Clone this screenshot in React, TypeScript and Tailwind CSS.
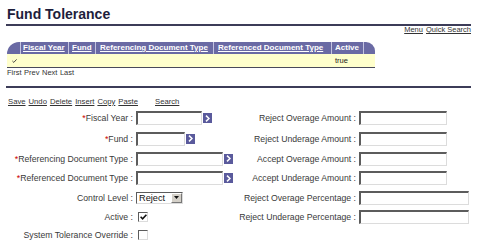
export default function App() {
    const inputCls = "h-[14px] bg-white border-t-2 border-l-2 border-b border-r border-t-[#5c5c5c] border-l-[#5c5c5c] border-b-[#dcdcdc] border-r-[#dcdcdc]"

    const Lookup = () => (
        <div className="w-[9px] h-[10px] ml-[1px] bg-[#5a5a9c] flex items-center justify-center">
            <svg width="5" height="7" viewBox="0 0 5 7">
                <path d="M1 0.6 L4 3.5 L1 6.4" stroke="white" strokeWidth="1.5" fill="none" />
            </svg>
        </div>
    )

    const Label = ({ text, req }: { text: string; req?: boolean }) => (
        <div className="text-right pr-[3px] whitespace-nowrap text-[#3a3a3a]">
            {req && <span className="text-[#cc0000]">*</span>}
            {text} :
        </div>
    )

    const Check = ({ checked }: { checked?: boolean }) => (
        <div className="ml-[2px] w-[10px] h-[10px] bg-white border-t border-l border-b border-r border-t-[#5c5c5c] border-l-[#5c5c5c] border-b-[#dcdcdc] border-r-[#dcdcdc] flex items-center justify-center">
            {checked && (
                <svg width="7" height="6" viewBox="0 0 7 6">
                    <path d="M0.6 2.8 L2.6 4.8 L6.4 0.8" stroke="#111" strokeWidth="1.6" fill="none" />
                </svg>
            )}
        </div>
    )

    const rows = [
        {
            h: "h-[20px]",
            left: <Label text="Fiscal Year" req />,
            field: <div className="flex items-center"><div className={`${inputCls} w-[66px]`} /><Lookup /></div>,
            right: <Label text="Reject Overage Amount" />,
            field2: <div className={`${inputCls} w-[88px]`} />,
        },
        {
            h: "h-[21px]",
            left: <Label text="Fund" req />,
            field: <div className="flex items-center"><div className={`${inputCls} w-[49px]`} /><Lookup /></div>,
            right: <Label text="Reject Underage Amount" />,
            field2: <div className={`${inputCls} w-[88px]`} />,
        },
        {
            h: "h-[19px]",
            left: <Label text="Referencing Document Type" req />,
            field: <div className="flex items-center"><div className={`${inputCls} w-[87px]`} /><Lookup /></div>,
            right: <Label text="Accept Overage Amount" />,
            field2: <div className={`${inputCls} w-[88px]`} />,
        },
        {
            h: "h-[20px]",
            left: <Label text="Referenced Document Type" req />,
            field: <div className="flex items-center"><div className={`${inputCls} w-[87px]`} /><Lookup /></div>,
            right: <Label text="Accept Underage Amount" />,
            field2: <div className={`${inputCls} w-[88px]`} />,
        },
        {
            h: "h-[19px]",
            left: <Label text="Control Level" />,
            field: (
                <div className="w-[47px] h-[12px] bg-white border-t border-l border-b border-r border-t-[#5c5c5c] border-l-[#5c5c5c] border-b-[#dcdcdc] border-r-[#dcdcdc] flex items-center">
                    <span className="flex-1 pl-[2px] text-[9.2px] leading-[10px] text-[#111]">Reject</span>
                    <div className="w-[11px] h-[10px] bg-[#d4d0c8] border-t border-l border-b border-r border-t-white border-l-white border-b-[#777] border-r-[#777] flex items-center justify-center">
                        <svg width="5" height="3" viewBox="0 0 5 3"><path d="M0 0 H5 L2.5 3 Z" fill="#111" /></svg>
                    </div>
                </div>
            ),
            right: <Label text="Reject Overage Percentage" />,
            field2: <div className={`${inputCls} w-[110px]`} />,
        },
        {
            h: "h-[19px]",
            left: <Label text="Active" />,
            field: <Check checked />,
            right: <Label text="Reject Underage Percentage" />,
            field2: <div className={`${inputCls} w-[110px]`} />,
        },
        {
            h: "h-[18px]",
            left: <Label text="System Tolerance Override" />,
            field: <Check />,
            right: null,
            field2: null,
        },
    ]

    return (
        <div className="w-[480px] h-[242px] bg-white overflow-hidden font-['Liberation_Sans',Arial,sans-serif]">
            <div className="w-[472px] pl-[6px] pr-[1px]">
                <h1 className="pt-[6px] pl-[1px] text-[14px] leading-[16px] font-bold text-[#1e1e3c]">Fund Tolerance</h1>
                <div className="mt-[2px] h-[2px] bg-[#3c3c58]" />
                <div className="flex justify-end gap-[3px] text-[7.5px] leading-[8px] text-[#333]">
                    <span className="underline">Menu</span>
                    <span className="underline">Quick Search</span>
                </div>

                <div className="mt-[8px] ml-[1px] w-[368px]">
                    <div className="flex h-[12px] bg-[#6a6aa4] rounded-tl-[12px] rounded-tr-[9px] text-[8px] leading-[12px] font-bold text-white">
                        <div className="w-[13px]" />
                        <div className="w-[48px] border-l border-[#c4c4e0] pl-[2px] underline">Fiscal Year</div>
                        <div className="w-[27px] border-l border-[#c4c4e0] pl-[3px] underline">Fund</div>
                        <div className="w-[118px] border-l border-[#c4c4e0] pl-[4px] underline whitespace-nowrap">Referencing Document Type</div>
                        <div className="w-[118px] border-l border-[#c4c4e0] pl-[4px] underline whitespace-nowrap">Referenced Document Type</div>
                        <div className="w-[32px] border-l border-[#c4c4e0] pl-[3px]">Active</div>
                        <div className="w-[12px] border-l border-[#c4c4e0]" />
                    </div>
                    <div className="flex h-[14px] bg-[#ffffcc] border-b border-[#4a4a5a] text-[7.5px] leading-[13px] text-[#222]">
                        <div className="w-[13px] flex items-center pl-[5px]">
                            <svg width="5" height="4" viewBox="0 0 5 4"><path d="M0.4 2 L1.8 3.4 L4.6 0.4" stroke="#333" strokeWidth="0.9" fill="none" /></svg>
                        </div>
                        <div className="w-[48px]" />
                        <div className="w-[27px]" />
                        <div className="w-[118px]" />
                        <div className="w-[118px]" />
                        <div className="w-[32px] pl-[4px]">true</div>
                    </div>
                </div>

                <div className="mt-[1px] pl-[1px] flex gap-[2.5px] text-[7.5px] leading-[8px] text-[#333]">
                    <span>First</span>
                    <span>Prev</span>
                    <span>Next</span>
                    <span>Last</span>
                </div>

                <div className="mt-[9px] h-[2px] bg-[#3c3c58]" />

                <div className="mt-[9px] pl-[2px] flex gap-[3px] text-[7.7px] leading-[9px] text-[#333] underline">
                    <span>Save</span>
                    <span>Undo</span>
                    <span>Delete</span>
                    <span>Insert</span>
                    <span>Copy</span>
                    <span>Paste</span>
                    <span className="ml-[14px]">Search</span>
                </div>

                <div className="mt-[2px] text-[8.7px] leading-[10px]">
                    {rows.map((r, i) => (
                        <div key={i} className={`grid grid-cols-[130px_102px_121px_1fr] items-center ${r.h}`}>
                            {r.left}
                            <div>{r.field}</div>
                            {r.right ?? <div />}
                            <div>{r.field2}</div>
                        </div>
                    ))}
                </div>
            </div>
        </div>
    )
}
